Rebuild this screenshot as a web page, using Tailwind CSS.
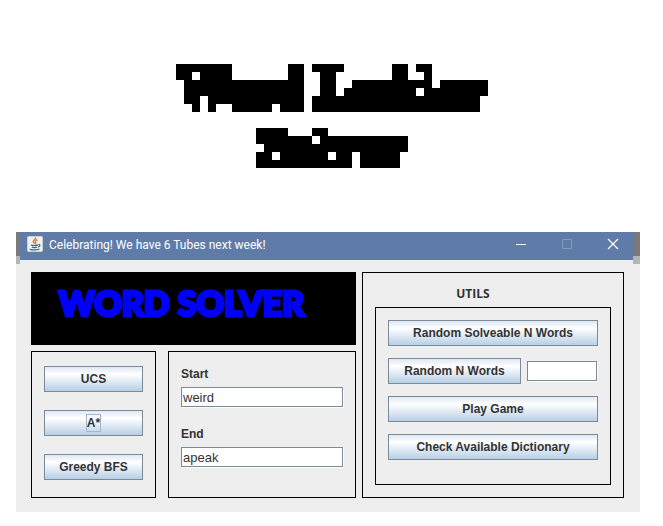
<!DOCTYPE html>
<html lang="en">
<head>
<meta charset="utf-8">
<title>Word Solver</title>
<script src="https://cdn.jsdelivr.net/npm/@tailwindcss/browser@4"></script>
</head>
<body class="bg-white text-[#333333] font-['Liberation_Sans',Arial,sans-serif] text-xs">
<header class="pt-16 pb-16 pl-44">
  <svg class="block" width="312" height="104" viewBox="0 0 39 13" shape-rendering="crispEdges" aria-hidden="true">
    <path d="M0 0h7v1H0zM14 0h2v1h-2zM17 0h4v1h-4zM27 0h2v1h-2zM30 0h2v1h-2z
      M0 1h2v1H0zM3 1h4v1H3zM14 1h2v1h-2zM18 1h2v1h-2zM27 1h2v1h-2zM31 1h1v1h-1z
      M1 2h15v1H1zM18 2h2v1h-2zM22 2h10v1H22zM33 2h6v1h-6z
      M1 3h15v1H1zM18 3h2v1h-2zM21 3h9v1h-9zM31 3h8v1h-8z
      M1 4h2v1H1zM4 4h12v1H4zM17 4h21v1H17z
      M2 5h1v1H2zM4 5h1v1H4zM7 5h5v1H7zM13 5h3v1h-3zM17 5h21v1H17z
      M10 8h4v1h-4zM17 8h2v1h-2z
      M10 9h7v1h-7zM18 9h11v1H18z
      M11 10h18v1H11z
      M10 11h2v1h-2zM13 11h6v1h-6zM20 11h2v1h-2zM23 11h5v1h-5z
      M10 12h12v1H10zM23 12h5v1h-5z"/>
  </svg>
</header>

<main class="relative ml-4 mr-[23px] bg-[#eeeeee]">
  <div class="absolute left-0 top-0 w-1 h-6 bg-[#797979]"></div>
  <div class="absolute left-0 top-6 w-1 h-2 bg-[#b5b5b5]"></div>
  <div class="absolute right-0 top-0 w-[6px] h-6 bg-[#797979]"></div>
  <div class="absolute right-0 top-6 w-[7px] h-2 bg-[#b5b5b5]"></div>

  <div class="ml-1 mr-[6px] h-7 pl-[7px] pr-[13px] flex items-center bg-[#5f7ca8] text-white">
    <svg class="mb-1" width="16" height="16" viewBox="0 0 16 16" aria-hidden="true">
      <rect x=".5" y=".5" width="15" height="15" rx="1" fill="#eef0f1" stroke="#c9d0d6"/>
      <path d="M8.500 1.500c1 1.500-3 2.500-2.200 4.300.3.8 1 1.200 1 1.900M10.500 3.700C8.600 4.400 7.800 5 8.400 6.100c.5.7.4 1.200-.2 1.700" fill="none" stroke="#e0842f" stroke-width="1.500"/>
      <path d="M4 9c1.500.7 5.300.6 6.800-.1M4.800 11c1.500.6 3.800.6 5.300 0M11.300 8.600c2.300-.4 2 1.900-.2 2.500M3.200 12.900c-1 1.300 6.800 1.500 9.300.1" fill="none" stroke="#3f6078" stroke-width="1.200"/>
    </svg>
    <h1 class="ml-[6px] mb-1 pt-px font-['Roboto',sans-serif] text-xs leading-4">Celebrating! We have 6 Tubes next week!</h1>
    <div class="ml-auto mb-1 flex gap-[30px]">
      <button type="button" aria-label="Minimize" class="w-4 h-4"><svg width="16" height="16" viewBox="0 0 16 16"><path d="M3 8.500h10" stroke="#fff"/></svg></button>
      <button type="button" aria-label="Maximize" disabled class="w-4 h-4"><svg width="16" height="16" viewBox="0 0 16 16"><path d="M3.500 3.500h9v9h-9z" fill="none" stroke="#819abf"/></svg></button>
      <button type="button" aria-label="Close" class="w-4 h-4"><svg width="16" height="16" viewBox="0 0 16 16"><path d="M3 3l10 10M13 3L3 13" stroke="#fff" stroke-width="1.200"/></svg></button>
    </div>
  </div>

  <div class="grid grid-cols-[325fr_262fr] gap-[6px] pt-3 pb-[14px] pl-[15px] pr-4">
    <div class="flex flex-col gap-[6px]">
      <div class="bg-black h-[73px] pl-7 pt-2">
        <h2 class="font-['Lato',sans-serif] font-black text-[34px] leading-[46px] text-[#0000ff] whitespace-nowrap [-webkit-text-stroke:3px_#0000ff]">WORD SOLVER</h2>
      </div>
      <div class="grid grid-cols-[125fr_188fr] gap-3 grow">
        <section class="border border-black px-3 pt-[14px] pb-[17px] flex flex-col gap-[18px]">
          <button type="button" class="h-[26px] border border-[#7a8a99] bg-linear-to-b from-[#dde8f3] via-white via-30% to-[#b8cfe5] font-bold">UCS</button>
          <button type="button" class="h-[26px] border border-[#7a8a99] bg-linear-to-b from-[#dde8f3] via-white via-30% to-[#b8cfe5] font-bold"><span class="inline-block border border-[#a3b8cc] leading-4">A*</span></button>
          <button type="button" class="h-[26px] border border-[#7a8a99] bg-linear-to-b from-[#dde8f3] via-white via-30% to-[#b8cfe5] font-bold">Greedy BFS</button>
        </section>
        <section class="border border-black px-3 pt-[14px] flex flex-col">
          <label for="start" class="font-bold leading-4 mb-[5px]">Start</label>
          <input id="start" type="text" value="weird" class="w-full h-5 border border-[#7a8a99] bg-white pl-px text-[13px] leading-4 shadow-[1px_1px_0_#fff]">
          <label for="end" class="font-bold leading-4 mt-[19px] mb-[5px]">End</label>
          <input id="end" type="text" value="apeak" class="w-full h-5 border border-[#7a8a99] bg-white pl-px text-[13px] leading-4 shadow-[1px_1px_0_#fff]">
        </section>
      </div>
    </div>

    <section class="border border-black px-3 pt-[13px] pb-3 flex flex-col">
      <h2 class="text-center pr-10 mb-[5px] font-['Open_Sans',sans-serif] font-bold leading-4">UTILS</h2>
      <div class="grow border border-black p-3 flex flex-col gap-3">
        <button type="button" class="h-[26px] border border-[#7a8a99] bg-linear-to-b from-[#dde8f3] via-white via-30% to-[#b8cfe5] font-bold">Random Solveable N Words</button>
        <div class="flex items-center gap-[6px] pr-px">
          <button type="button" class="grow h-[26px] border border-[#7a8a99] bg-linear-to-b from-[#dde8f3] via-white via-30% to-[#b8cfe5] font-bold">Random N Words</button>
          <input type="text" aria-label="N" class="w-[70px] h-5 border border-[#7a8a99] bg-white pl-px text-[13px] shadow-[1px_1px_0_#fff]">
        </div>
        <button type="button" class="h-[26px] border border-[#7a8a99] bg-linear-to-b from-[#dde8f3] via-white via-30% to-[#b8cfe5] font-bold">Play Game</button>
        <button type="button" class="h-[26px] border border-[#7a8a99] bg-linear-to-b from-[#dde8f3] via-white via-30% to-[#b8cfe5] font-bold">Check Available Dictionary</button>
      </div>
    </section>
  </div>
</main>
</body>
</html>
